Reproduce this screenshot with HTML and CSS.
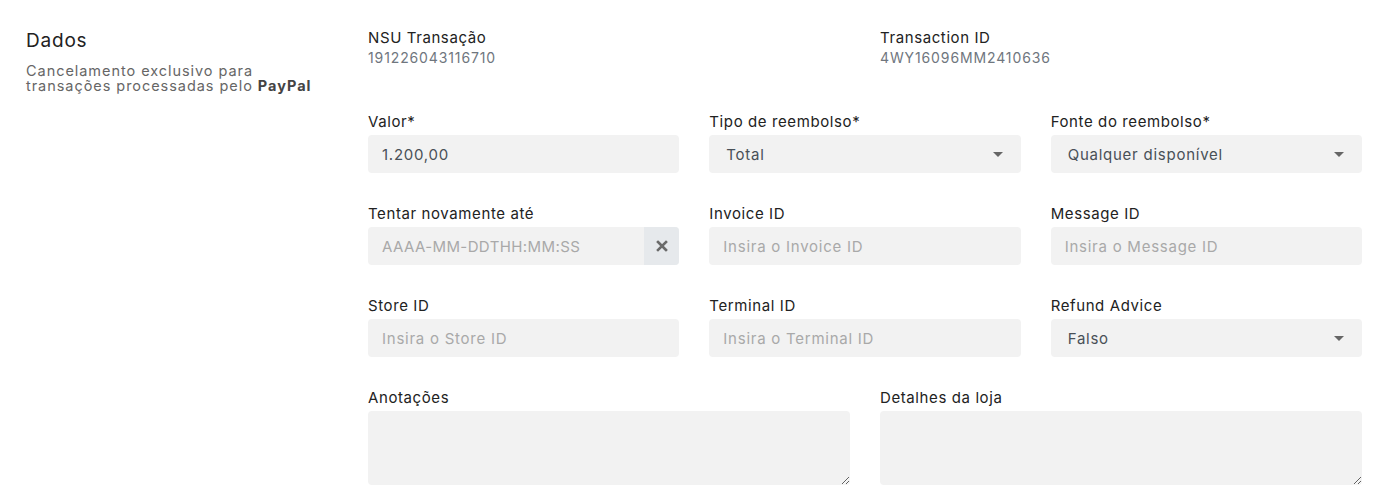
FILE: index.html
```html
<!DOCTYPE html>
<html lang="pt">
<head>
<meta charset="utf-8">
<link rel="stylesheet" href="styles.css">
</head>
<body>
<div class="page">
  <aside class="side">
    <h2 class="title">Dados</h2>
    <p class="desc">Cancelamento exclusivo para<br>transações processadas pelo <b>PayPal</b></p>
  </aside>
  <main class="form">
    <div class="row two info">
      <div class="field">
        <div class="label">NSU Transação</div>
        <div class="value">191226043116710</div>
      </div>
      <div class="field">
        <div class="label">Transaction ID</div>
        <div class="value">4WY16096MM2410636</div>
      </div>
    </div>
    <div class="row three">
      <div class="field">
        <div class="label">Valor*</div>
        <div class="input"><span class="text">1.200,00</span></div>
      </div>
      <div class="field">
        <div class="label">Tipo de reembolso*</div>
        <div class="input select"><span class="text">Total</span><span class="caret"></span></div>
      </div>
      <div class="field">
        <div class="label">Fonte do reembolso*</div>
        <div class="input select"><span class="text">Qualquer disponível</span><span class="caret"></span></div>
      </div>
    </div>
    <div class="row three">
      <div class="field">
        <div class="label">Tentar novamente até</div>
        <div class="input group"><span class="text ph upper">AAAA-MM-DDTHH:MM:SS</span>
          <span class="clear"><svg width="12" height="12" viewBox="0 0 12 12"><path d="M2 2 L10 10 M10 2 L2 10" stroke="#6b6b6b" stroke-width="2.6" stroke-linecap="square"/></svg></span>
        </div>
      </div>
      <div class="field">
        <div class="label">Invoice ID</div>
        <div class="input"><span class="text ph">Insira o Invoice ID</span></div>
      </div>
      <div class="field">
        <div class="label">Message ID</div>
        <div class="input"><span class="text ph">Insira o Message ID</span></div>
      </div>
    </div>
    <div class="row three">
      <div class="field">
        <div class="label">Store ID</div>
        <div class="input"><span class="text ph">Insira o Store ID</span></div>
      </div>
      <div class="field">
        <div class="label">Terminal ID</div>
        <div class="input"><span class="text ph">Insira o Terminal ID</span></div>
      </div>
      <div class="field">
        <div class="label">Refund Advice</div>
        <div class="input select"><span class="text">Falso</span><span class="caret"></span></div>
      </div>
    </div>
    <div class="row two">
      <div class="field">
        <div class="label">Anotações</div>
        <textarea class="area"></textarea>
      </div>
      <div class="field">
        <div class="label">Detalhes da loja</div>
        <textarea class="area"></textarea>
      </div>
    </div>
  </main>
</div>
</body>
</html>
```
FILE: styles.css
```css
* { box-sizing: border-box; }
html, body { margin: 0; padding: 0; background: #fff; }
body { font-family: Inter, "Open Sans", "Liberation Sans", sans-serif; color: #222; letter-spacing: 0.7px; }
.page { display: flex; padding: 28px 26px 0 26px; }
.side { width: 342px; flex: none; }
.title { margin: 0; font-size: 19px; font-weight: 400; line-height: 26px; color: #222; letter-spacing: 0.8px; }
.desc { margin: 9px 0 0; font-size: 14.5px; line-height: 15px; color: #666; letter-spacing: 0.95px; }
.desc b { color: #444; font-weight: 700; letter-spacing: 1px; }
.form { flex: 1; display: flex; flex-direction: column; gap: 31px; }
.row { display: grid; column-gap: 30px; }
.row.two { grid-template-columns: 1fr 1fr; }
.row.three { grid-template-columns: 1fr 1fr 1fr; }
.row.info { margin-bottom: 13px; }
.label { font-size: 15px; line-height: 20px; color: #222; letter-spacing: 0.6px; }
.value { font-size: 14px; line-height: 20px; color: #6f767e; letter-spacing: 0.88px; }
.field .label + .input, .field .label + .area { margin-top: 3px; }
.input { height: 38px; background: #f2f2f2; border-radius: 4px; display: flex; align-items: center; padding: 0 14px; font-size: 15px; color: #495057; letter-spacing: 0.75px; }
.input .text { flex: 1; white-space: nowrap; }
.input .ph { color: #a9a9a9; }
.input .upper { letter-spacing: 0.4px; }
.input.select { padding-right: 18px; padding-left: 17px; }
.caret { width: 0; height: 0; border-left: 5px solid transparent; border-right: 5px solid transparent; border-top: 5px solid #666; }
.input.group { padding-right: 0; overflow: hidden; }
.clear { width: 35px; height: 100%; background: #e6e9ec; display: flex; align-items: center; justify-content: center; }
.area { display: block; width: 100%; height: 74px; background: #f2f2f2; border: none; border-radius: 4px; resize: vertical; font-family: inherit; font-size: 15px; padding: 8px 14px; }
```
